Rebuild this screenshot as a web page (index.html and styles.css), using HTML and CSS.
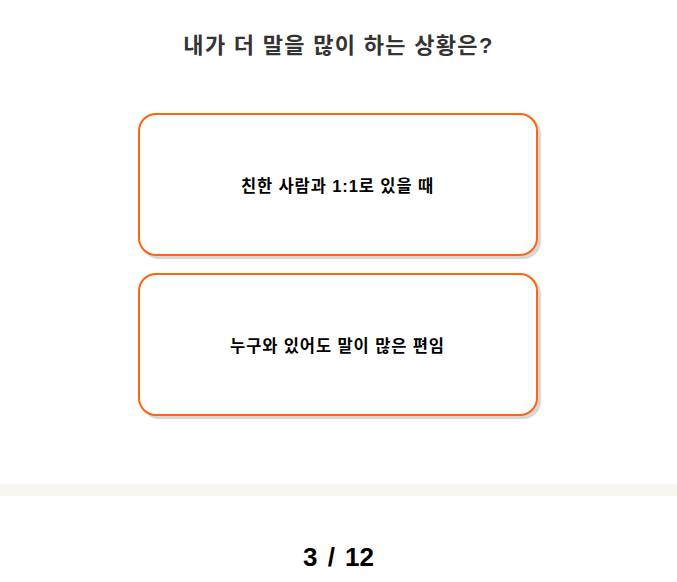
FILE: index.html
```html
<!DOCTYPE html>
<html lang="ko">
<head>
<meta charset="utf-8">
<link rel="stylesheet" href="styles.css">
</head>
<body>
<main class="quiz">
  <h2 class="question">내가 더 말을 많이 하는 상황은?</h2>
  <div class="options">
    <button class="option">친한 사람과 1:1로 있을 때</button>
    <button class="option">누구와 있어도 말이 많은 편임</button>
  </div>
</main>
<div class="band"></div>
<footer class="progress">3 / 12</footer>
</body>
</html>
```
FILE: styles.css
```css
html, body {
  margin: 0;
  padding: 0;
  background: #ffffff;
}
body {
  font-family: "Liberation Sans", "Noto Sans CJK KR", sans-serif;
  width: 677px;
}
.quiz {
  display: flex;
  flex-direction: column;
  align-items: center;
  padding-top: 31px;
  height: 452px;
  box-sizing: border-box;
}
.question {
  margin: 0;
  font-size: 22px;
  line-height: 30px;
  letter-spacing: 1.3px;
  font-weight: 700;
  color: #333333;
}
.options {
  margin-top: 52px;
  display: flex;
  flex-direction: column;
  gap: 17px;
  transform: translateX(-1px);
}
.option {
  width: 400px;
  height: 143px;
  box-sizing: border-box;
  border: 2px solid #ff6411;
  border-radius: 18px;
  background: #ffffff;
  box-shadow: 3px 3px 1px #d6d6d6;
  font-family: "Liberation Sans", "Noto Sans CJK KR", sans-serif;
  font-size: 16.5px;
  letter-spacing: 0.9px;
  font-weight: 700;
  color: #000000;
  padding: 0;
  margin: 0;
}
.band {
  margin-top: 32px;
  height: 12px;
  background: #faf6f2;
}
.progress {
  text-align: center;
  margin-top: 46px;
  font-size: 26px;
  line-height: 30px;
  word-spacing: 3px;
  font-weight: 700;
  color: #000000;
}
```
